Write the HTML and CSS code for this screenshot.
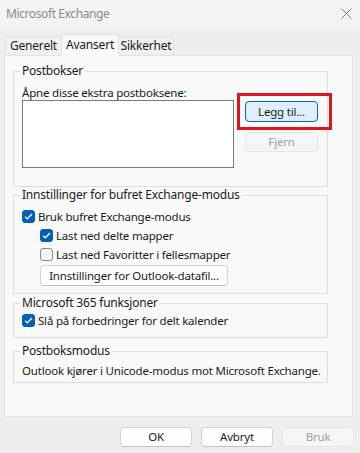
FILE: index.html
```html
<!DOCTYPE html>
<html lang="no">
<head>
<meta charset="utf-8">
<title>Microsoft Exchange</title>
<link rel="stylesheet" href="styles.css">
</head>
<body>
<div class="window">
  <div class="titlebar">
    <span class="title">Microsoft Exchange</span>
    <svg class="close" width="11" height="11" viewBox="0 0 11 11"><path d="M0.5 0.5L10.5 10.5M10.5 0.5L0.5 10.5" stroke="#7a7a7a" stroke-width="1" fill="none"/></svg>
  </div>
  <div class="tabs">
    <div class="tab t1">Generelt</div>
    <div class="tab t2 active">Avansert</div>
    <div class="tab t3">Sikkerhet</div>
  </div>
  <div class="panel">
    <fieldset class="group g1">
      <legend>Postbokser</legend>
      <div class="label">Åpne disse ekstra postboksene:</div>
      <div class="mbrow">
        <div class="listbox"></div>
        <div class="mbbuttons">
          <div class="addwrap">
            <button class="btn default">Legg til...</button>
            <div class="highlight"></div>
          </div>
          <button class="btn disabled small">Fjern</button>
        </div>
      </div>
    </fieldset>
    <fieldset class="group g2">
      <legend>Innstillinger for bufret Exchange-modus</legend>
      <div class="check first"><span class="box on"><svg width="9" height="7" viewBox="0 0 9 7"><path d="M1 3.6L3.3 5.8L8 1" stroke="#fff" stroke-width="1.3" fill="none"/></svg></span>Bruk bufret Exchange-modus</div>
      <div class="check indent"><span class="box on"><svg width="9" height="7" viewBox="0 0 9 7"><path d="M1 3.6L3.3 5.8L8 1" stroke="#fff" stroke-width="1.3" fill="none"/></svg></span>Last ned delte mapper</div>
      <div class="check indent"><span class="box"></span>Last ned Favoritter i fellesmapper</div>
      <button class="btn wide">Innstillinger for Outlook-datafil...</button>
    </fieldset>
    <fieldset class="group g3">
      <legend>Microsoft 365 funksjoner</legend>
      <div class="check"><span class="box on"><svg width="9" height="7" viewBox="0 0 9 7"><path d="M1 3.6L3.3 5.8L8 1" stroke="#fff" stroke-width="1.3" fill="none"/></svg></span>Slå på forbedringer for delt kalender</div>
    </fieldset>
    <fieldset class="group g4">
      <legend>Postboksmodus</legend>
      <div class="text">Outlook kjører i Unicode-modus mot Microsoft Exchange.</div>
    </fieldset>
  </div>
  <div class="footer">
    <button class="btn foot">OK</button>
    <button class="btn foot">Avbryt</button>
    <button class="btn foot disabled">Bruk</button>
  </div>
</div>
</body>
</html>
```

FILE: styles.css
```css
* { box-sizing: border-box; }
html, body { margin: 0; padding: 0; }
body {
  width: 360px;
  height: 453px;
  background: #eeeeee;
  font-family: "Noto Sans", "Open Sans", sans-serif;
  font-size: 11.5px;
  letter-spacing: -0.2px;
  color: #1b1b1b;
  overflow: hidden;
}
.window { display: flex; flex-direction: column; height: 453px; }
.titlebar {
  height: 28px;
  background: #f3f3f3;
  display: flex;
  align-items: center;
  justify-content: space-between;
  padding: 0 8px 2px 6px;
}
.title { color: #8a8a8a; font-size: 12px; letter-spacing: -0.4px; }
.tabs {
  display: flex;
  align-items: flex-end;
  height: 27px;
  padding-left: 5px;
}
.tab {
  height: 19px;
  line-height: 18px;
  text-align: center;
  border: 1px solid #e2e2e2;
  border-bottom: none;
  background: #f0f0f0;
  color: #1b1b1b;
  font-size: 12px;
}
.t1 { width: 56px; border-right: none; }
.t2 { width: 58px; }
.t3 { width: 55px; border-left: none; }
.tab.active {
  height: 22px;
  background: #f9f9f9;
  margin-bottom: -1px;
  position: relative;
  line-height: 19px;
}
.panel {
  margin: 0 7px 0 4px;
  height: 362px;
  background: #f9f9f9;
  border: 1px solid #e2e2e2;
  padding: 0 24px 0 8px;
  display: flex;
  flex-direction: column;
}
.group {
  margin: 0;
  border: 1px solid #dedede;
  padding: 0 6px 0 8px;
  min-width: 0;
}
.group legend {
  padding: 0 2px;
  margin-left: -2px;
  line-height: 16px;
  font-size: 12px;
}
.g1 { margin-top: 7px; height: 124px; }
.g2 { margin-top: 0; height: 107px; }
.g3 { margin-top: 1px; height: 43px; }
.g4 { margin-top: 5px; height: 40px; }
.label { margin-top: 6px; line-height: 15px; }
.mbrow { display: flex; align-items: flex-start; }
.listbox {
  width: 212px;
  height: 68px;
  background: #ffffff;
  border: 1px solid #7a7a7a;
  flex: none;
}
.mbbuttons {
  display: flex;
  flex-direction: column;
  margin-left: 11px;
  margin-top: 1px;
  gap: 10px;
}
.addwrap { position: relative; height: 21px; }
.highlight {
  position: absolute;
  left: -8px;
  top: -8px;
  width: 95px;
  height: 37px;
  border: 3px solid #e0141e;
  pointer-events: none;
}
.btn {
  font-family: inherit;
  font-size: 11.5px;
  letter-spacing: -0.2px;
  color: #1b1b1b;
  background: #fdfdfd;
  border: 1px solid #d3d3d3;
  border-bottom-color: #c2c2c2;
  border-radius: 4px;
  height: 21px;
  padding: 0;
  line-height: 18px;
}
.btn.default {
  width: 73px;
  background: #e0eef9;
  border: 1px solid #0067c0;
}
.btn.small { width: 73px; height: 20px; }
.btn.disabled {
  background: #f5f5f5;
  border-color: #e5e5e5;
  color: #a0a0a0;
}
.check {
  display: flex;
  align-items: center;
  height: 19px;
  white-space: nowrap;
}
.check.first { margin-top: 4px; }
.check.indent { padding-left: 18px; }
.box {
  width: 13px;
  height: 13px;
  border-radius: 3px;
  border: 1px solid #8a8a8a;
  background: #f4f4f4;
  margin-right: 3px;
  display: flex;
  align-items: center;
  justify-content: center;
  flex: none;
}
.box.on { background: #005fb8; border-color: #005fb8; }
.btn.wide { width: 188px; height: 21px; margin-left: 18px; margin-top: 1px; }
.text { margin-top: 4px; line-height: 15px; white-space: nowrap; }
.footer {
  display: flex;
  justify-content: flex-end;
  gap: 9px;
  padding: 10px 6px 0 0;
}
.btn.foot { width: 72px; height: 20px; }
```
